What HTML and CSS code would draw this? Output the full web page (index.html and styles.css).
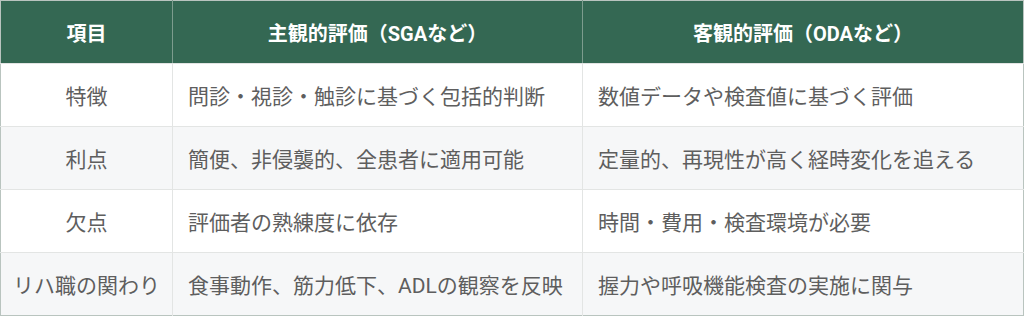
FILE: index.html
```html
<!DOCTYPE html>
<html lang="ja">
<head>
<meta charset="utf-8">
<title>主観的評価と客観的評価</title>
<link rel="stylesheet" href="styles.css">
</head>
<body>
<table class="cmp">
  <colgroup>
    <col class="c1">
    <col class="c2">
    <col class="c3">
  </colgroup>
  <thead>
    <tr>
      <th>項目</th>
      <th>主観的評価（SGAなど）</th>
      <th>客観的評価（ODAなど）</th>
    </tr>
  </thead>
  <tbody>
    <tr>
      <td class="label">特徴</td>
      <td>問診・視診・触診に基づく包括的判断</td>
      <td>数値データや検査値に基づく評価</td>
    </tr>
    <tr class="alt">
      <td class="label">利点</td>
      <td>簡便、非侵襲的、全患者に適用可能</td>
      <td>定量的、再現性が高く経時変化を追える</td>
    </tr>
    <tr>
      <td class="label">欠点</td>
      <td>評価者の熟練度に依存</td>
      <td>時間・費用・検査環境が必要</td>
    </tr>
    <tr class="alt">
      <td class="label">リハ職の関わり</td>
      <td>食事動作、筋力低下、ADLの観察を反映</td>
      <td>握力や呼吸機能検査の実施に関与</td>
    </tr>
  </tbody>
</table>
</body>
</html>
```

FILE: styles.css
```css
html, body {
  margin: 0;
  padding: 0;
  background: #ffffff;
}
body {
  font-family: Roboto, "Noto Sans CJK JP", sans-serif;
}
.cmp {
  width: 1024px;
  border-collapse: collapse;
  table-layout: fixed;
  border: 1px solid #b9c4bf;
}
.c1 { width: 172px; }
.c2 { width: 410px; }
.c3 { width: auto; }
.cmp th {
  background: #346853;
  color: #ffffff;
  font-weight: 700;
  font-size: 20px;
  height: 62px;
  padding: 0 12px;
  text-align: center;
  border-left: 1px solid #7d9c8e;
  border-bottom: 1px solid #e2e4e3;
}
.cmp th:first-child { border-left: none; }
.cmp td {
  color: #5e5e5e;
  font-size: 21px;
  height: 62px;
  padding: 0 15px;
  text-align: left;
  border-left: 1px solid #e3e5e4;
  border-bottom: 1px solid #e3e5e4;
  white-space: nowrap;
}
.cmp td:first-child { border-left: none; }
.cmp td.label {
  text-align: center;
  padding: 0 6px;
}
.cmp tr.alt td {
  background: #f6f7f8;
}
.cmp tbody tr:last-child td {
  border-bottom: none;
}
```
